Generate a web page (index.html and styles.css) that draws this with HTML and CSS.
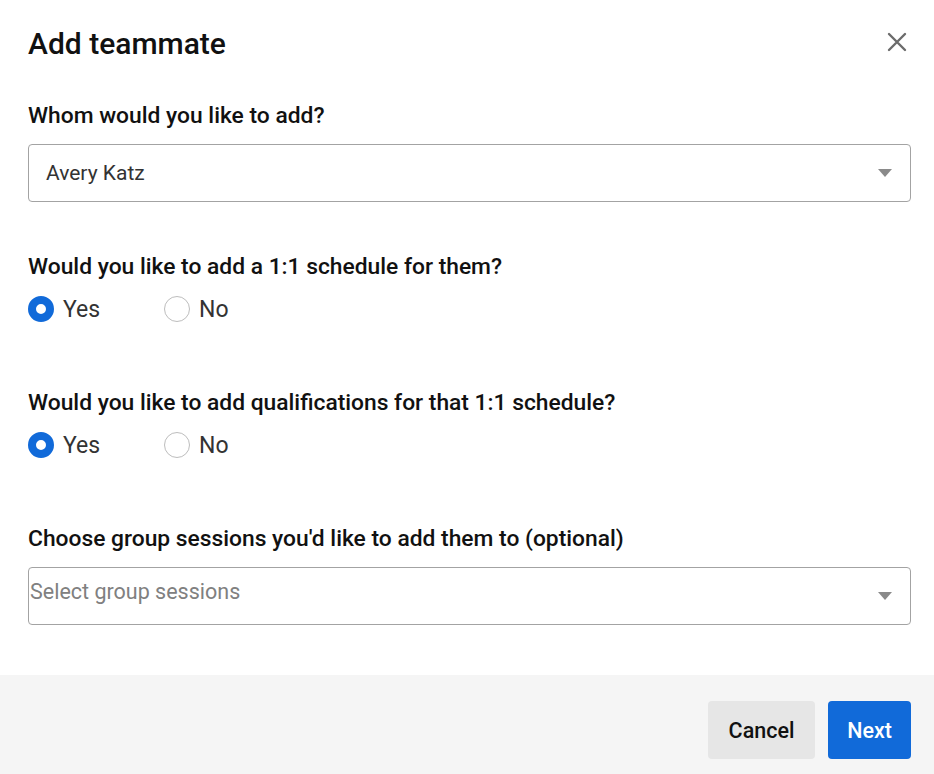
FILE: index.html
```html
<!DOCTYPE html>
<html>
<head>
<meta charset="utf-8">
<link rel="stylesheet" href="styles.css">
</head>
<body>
<div class="modal">
  <div class="body">
    <div class="header">
      <h1 class="title">Add teammate</h1>
      <button class="close" aria-label="Close">
        <svg width="20" height="20" viewBox="0 0 20 20"><path d="M2 2 L18 18 M18 2 L2 18" stroke="#6b6b6b" stroke-width="2.4" stroke-linecap="round" fill="none"/></svg>
      </button>
    </div>

    <div class="field">
      <div class="label">Whom would you like to add?</div>
      <div class="select">
        <span class="value">Avery Katz</span>
        <span class="caret"></span>
      </div>
    </div>

    <div class="field q">
      <div class="label">Would you like to add a 1:1 schedule for them?</div>
      <div class="radios">
        <label class="radio"><span class="dot on"></span>Yes</label>
        <label class="radio"><span class="dot"></span>No</label>
      </div>
    </div>

    <div class="field q after-radio">
      <div class="label">Would you like to add qualifications for that 1:1 schedule?</div>
      <div class="radios">
        <label class="radio"><span class="dot on"></span>Yes</label>
        <label class="radio"><span class="dot"></span>No</label>
      </div>
    </div>

    <div class="field q after-radio">
      <div class="label">Choose group sessions you'd like to add them to (optional)</div>
      <div class="select multi">
        <span class="placeholder">Select group sessions</span>
        <span class="caret"></span>
      </div>
    </div>
  </div>
  <div class="footer">
    <button class="btn cancel">Cancel</button>
    <button class="btn next">Next</button>
  </div>
</div>
</body>
</html>
```
FILE: styles.css
```css
* { box-sizing: border-box; }
html, body { margin: 0; padding: 0; background: #fff; }
body { font-family: Roboto, "Noto Sans", sans-serif; color: #111; }
.modal { width: 934px; height: 774px; display: flex; flex-direction: column; }
.body { flex: 1; padding: 0 23px 0 28px; }
.header { display: flex; justify-content: space-between; align-items: center; height: 88px; }
.title { margin: 0; font-size: 30px; font-weight: 500; color: #111; line-height: 36px; }
.close { background: none; border: 0; padding: 0; width: 20px; height: 20px; margin-right: 4px; margin-top: -4px; cursor: pointer; }
.close svg { display: block; }
.field { display: flex; flex-direction: column; }
.header + .field { margin-top: 14px; }
.label { font-size: 22.8px; font-weight: 500; color: #111; line-height: 28px; }
.field .label { margin-bottom: 14px; }
.q { margin-top: 51px; }
.q.after-radio { margin-top: 66px; }
.select { height: 58px; border: 1px solid #a3a3a3; border-radius: 4px; display: flex; align-items: center; justify-content: space-between; padding: 0 18px 0 17px; }
.value { font-size: 21px; color: #333; }
.caret { width: 0; height: 0; border-left: 7px solid transparent; border-right: 7px solid transparent; border-top: 8px solid #8a8a8a; }
.multi { align-items: flex-start; padding-left: 1px; }
.multi .placeholder { font-size: 21.5px; color: #808080; margin-top: 11px; }
.multi .caret { margin-top: 24px; }
.radios { display: flex; margin-top: 0; }
.radio { display: flex; align-items: center; font-size: 23px; color: #333; width: 136px; height: 28px; }
.dot { width: 26px; height: 26px; border-radius: 50%; border: 1px solid #bdbdbd; margin-right: 9px; background: #fff; flex: none; }
.dot.on { border: 8px solid #116ad9; background: #fff; }
.footer { height: 99px; background: #f5f5f5; display: flex; justify-content: flex-end; align-items: flex-start; gap: 13px; padding: 26px 23px 0 0; }
.btn { height: 58px; border: 0; border-radius: 4px; font-family: Roboto, "Noto Sans", sans-serif; font-size: 21.5px; font-weight: 500; padding: 0; }
.cancel { background: #e6e6e6; color: #111; width: 107px; }
.next { background: #116ad9; color: #fff; width: 83px; }
```
